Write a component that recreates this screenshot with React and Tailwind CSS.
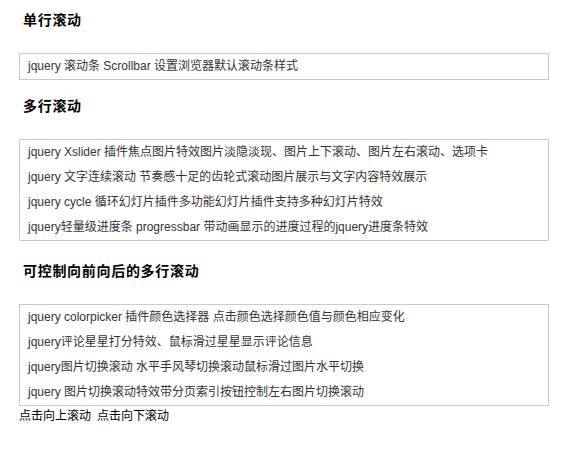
const single = ["jquery 滚动条 Scrollbar 设置浏览器默认滚动条样式"];

const multi = [
  "jquery Xslider 插件焦点图片特效图片淡隐淡现、图片上下滚动、图片左右滚动、选项卡",
  "jquery 文字连续滚动 节奏感十足的齿轮式滚动图片展示与文字内容特效展示",
  "jquery cycle 循环幻灯片插件多功能幻灯片插件支持多种幻灯片特效",
  "jquery轻量级进度条 progressbar 带动画显示的进度过程的jquery进度条特效",
];

const ctrl = [
  "jquery colorpicker 插件颜色选择器 点击颜色选择颜色值与颜色相应变化",
  "jquery评论星星打分特效、鼠标滑过星星显示评论信息",
  "jquery图片切换滚动 水平手风琴切换滚动鼠标滑过图片水平切换",
  "jquery 图片切换滚动特效带分页索引按钮控制左右图片切换滚动",
];

const Heading = ({ children, top }) => (
  <h2
    className={`pl-1 ${top} mb-[23px] text-[14px] leading-[20px] font-bold tracking-[0.7px] text-black`}
  >
    {children}
  </h2>
);

const Box = ({ items }) => (
  <ul className="w-[530px] border border-[#cacaca] bg-white">
    {items.map((t) => (
      <li key={t} className="pl-2 h-[25px] leading-[25px] text-[12px] text-[#333] whitespace-nowrap overflow-hidden">
        {t}
      </li>
    ))}
  </ul>
);

export default function App() {
  return (
    <div
      className="w-[570px] h-[450px] bg-white pl-[19px] pt-[10px]"
      style={{ fontFamily: '"Liberation Sans", "Noto Sans CJK SC", sans-serif' }}
    >
      <Heading top="mt-0">单行滚动</Heading>
      <Box items={single} />

      <Heading top="mt-[16px]">多行滚动</Heading>
      <Box items={multi} />

      <Heading top="mt-[20px]">可控制向前向后的多行滚动</Heading>
      <Box items={ctrl} />

      <div className="flex gap-[6px] text-[12px] leading-[20px] text-black">
        <span className="cursor-pointer">点击向上滚动</span>
        <span className="cursor-pointer">点击向下滚动</span>
      </div>
    </div>
  );
}
